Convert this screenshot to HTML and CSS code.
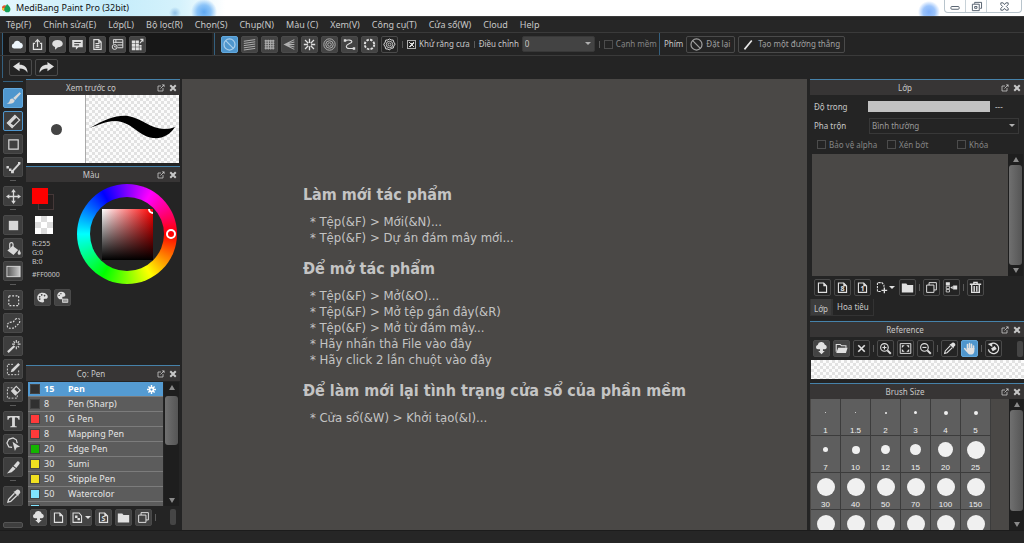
FILE: index.html
```html
<!DOCTYPE html>
<html lang="vi">
<head>
    <meta charset="UTF-8">
    <meta name="viewport" content="width=device-width, initial-scale=1.0">
    <title>MediBang Paint Pro (32bit)</title>
    <link rel="stylesheet" href="styles.css">
</head>
<body>
    <!-- Iconos -->
    <svg class="sprite" aria-hidden="true">
        <symbol id="cloud" viewBox="0 0 16 16"><path fill="#eef6fc" d="M4 13a3.2 3.2 0 0 1-.6-6.300A4.300 4.300 0 0 1 11.500 5.800 3.700 3.700 0 0 1 12 13z"/></symbol>
        <symbol id="share" viewBox="0 0 16 16"><path fill="none" stroke="currentColor" stroke-width="1.500" d="M5 6.500H3v7.500h10V6.500h-2M8 11V3M5.300 5 8 2l2.700 3"/></symbol>
        <symbol id="bubble" viewBox="0 0 16 16"><path fill="currentColor" d="M8 2.500c3.800 0 6.500 2 6.500 4.500S11.800 11.500 8.500 11.500L5 14.500v-3.400C3 10.500 1.500 9 1.500 7c0-2.500 2.700-4.500 6.500-4.500z"/></symbol>
        <symbol id="comment" viewBox="0 0 16 16"><path fill="currentColor" fill-rule="evenodd" d="M1.500 2.500h13v9H9l-3 3v-3H1.500zM4 5v1.300h8V5zM4 7.800v1.300h6V7.800z"/></symbol>
        <symbol id="doc" viewBox="0 0 16 16"><path fill="none" stroke="currentColor" stroke-width="1.400" d="M3.500 2h6l3 3v9h-9zM5.500 7h5M5.500 9.300h5M5.500 11.600h5M9.500 2v3h3"/></symbol>
        <symbol id="history" viewBox="0 0 16 16"><g fill="none" stroke="currentColor" stroke-width="1.200"><path d="M3 7V2h11.500v10H8M3 5.300h11.500M8 8.600h6.500M6 2v4"/><circle cx="4.500" cy="11" r="3"/><path d="M4.500 9.500V11H6"/></g></symbol>
        <symbol id="grid-edit" viewBox="0 0 16 16"><path fill="currentColor" d="M1 3h4v3.500H1zM5.700 3h4v3.500h-4zM1 7.200h4v3.500H1zM5.700 7.200h4v3.500h-4zM1 11.400h4V15H1zM5.700 11.400h4V15h-4zM10.400 8.500H13v2.200h-2.600zM10.400 11.400H13V15h-2.600z"/><path fill="none" stroke="currentColor" stroke-width="1.300" d="M11 6.500 14.500 2M11.500 1.700h3.200v3"/></symbol>
        <symbol id="ban" viewBox="0 0 16 16"><g fill="none" stroke="currentColor" stroke-width="1.500"><circle cx="8" cy="8" r="6.800"/><path d="M3.300 3.300 12.700 12.700"/></g></symbol>
        <symbol id="parallel" viewBox="0 0 16 16"><path fill="none" stroke="currentColor" stroke-width="1.200" d="M1 4 15 2M1 6.700 15 4.700M1 9.400 15 7.400M1 12.100 15 10.100M1 14.800l14-2"/></symbol>
        <symbol id="cross-grid" viewBox="0 0 16 16"><path fill="none" stroke="currentColor" stroke-width="1.400" d="M2 3.500h12M2 6.500h12M2 9.500h12M2 12.500h12M3.500 2v12M6.500 2v12M9.500 2v12M12.500 2v12"/></symbol>
        <symbol id="vanish" viewBox="0 0 16 16"><path fill="none" stroke="currentColor" stroke-width="1.300" d="M14 2 2 8l12 6M14 5 2 8l12 3M2 8h12"/></symbol>
        <symbol id="radial" viewBox="0 0 16 16"><path fill="none" stroke="currentColor" stroke-width="1.600" d="M8 1v5M8 10v5M1 8h5M10 8h5M2.500 2.500l4 4M9.500 9.500l4 4M13.500 2.500l-4 4M6.500 9.500l-4 4"/></symbol>
        <symbol id="rings" viewBox="0 0 16 16"><g fill="none" stroke="currentColor" stroke-width="1.200"><circle cx="8" cy="8" r="7"/><circle cx="8" cy="8" r="4.600"/><circle cx="8" cy="8" r="2.200"/></g></symbol>
        <symbol id="curve" viewBox="0 0 16 16"><path fill="none" stroke="currentColor" stroke-width="1.300" d="M2.500 3C7 2 11 2.500 11 4.500S4 7.500 4 10.500s4 2.500 9 2.500"/><path fill="currentColor" d="M1 1.500h3v3H1zM12 11.500h3v3h-3z"/></symbol>
        <symbol id="dots-ring" viewBox="0 0 16 16"><circle cx="8" cy="8" r="5.800" fill="none" stroke="currentColor" stroke-width="2.400" stroke-dasharray="3 1.555"/></symbol>
        <symbol id="gear" viewBox="0 0 16 16"><g fill="none" stroke="currentColor"><path stroke-width="1.200" d="M8 1.200 10 2.400l2.600.2.700 2.500 1.600 2.400-1.600 2.400-.7 2.500-2.600.2L8 14.800l-2-1.200-2.600-.2-.7-2.500L1.100 8.500V7.500l1.600-2.400.7-2.500 2.600-.2z"/><circle cx="8" cy="8" r="4"/><circle cx="8" cy="8" r="1.800"/></g></symbol>
        <symbol id="undo" viewBox="0 0 16 16"><path fill="currentColor" d="M0 7 7 2v3c5 0 8.500 2.700 8.500 8.500-2-3-4.500-4.500-8.500-4.500v3z"/></symbol>
        <symbol id="redo" viewBox="0 0 16 16"><path fill="currentColor" d="M16 7 9 2v3C4 5 .5 7.700.5 13.500 2.500 10.500 5 9 9 9v3z"/></symbol>
        <symbol id="line" viewBox="0 0 16 16"><path stroke="#e8e8e8" stroke-width="2" d="M3 14 12 3"/></symbol>
        <symbol id="popout" viewBox="0 0 16 16"><path fill="none" stroke="currentColor" stroke-width="1.600" d="M8 4H2v10h10V8M7 9l6-6"/><path fill="currentColor" d="M9.500 1H15v5.500z"/></symbol>
        <symbol id="close" viewBox="0 0 16 16"><path stroke="currentColor" stroke-width="4" d="M2.500 2.500l11 11M13.500 2.500l-11 11"/></symbol>
        <symbol id="brush" viewBox="0 0 16 16"><path fill="currentColor" d="M14.500 1.200 16 2.700 9.800 9.600 7.600 7.500zM7 8.100l2.300 2.100c-.6 3.500-4.900 4.200-8.600 2.900 2-.3 2.800-1.300 3.200-2.700.5-1.500 1.500-2.500 3.100-2.300z"/></symbol>
        <symbol id="eraser" viewBox="0 0 16 16"><path fill="none" stroke="currentColor" stroke-width="1.400" d="M9.500 1.500 14.500 6.500 6.500 14.500 1.500 9.500z"/><path fill="currentColor" d="M9.500 1.500l2 2-8 8-2-2zM8.500 12.500l-2 2-3.500-3.500 2-1z"/></symbol>
        <symbol id="square" viewBox="0 0 16 16"><path fill="none" stroke="currentColor" stroke-width="1.300" d="M3 3h10v10H3z"/></symbol>
        <symbol id="polyline" viewBox="0 0 16 16"><path fill="none" stroke="currentColor" stroke-width="2" d="M6.500 12.500l8-9"/><path fill="currentColor" d="M.5 6.500h2.600v2.600H.5zM3.200 9h2.600v2.600H3.200zM5.400 11h3v3h-3zM12.800 2h2.600v2.600h-2.600z"/></symbol>
        <symbol id="move" viewBox="0 0 16 16"><path stroke="currentColor" stroke-width="1.400" d="M8 2v12M2 8h12"/><path fill="currentColor" d="M8 0l2.500 3.500h-5zM8 16l2.500-3.500h-5zM0 8l3.500-2.500v5zM16 8l-3.500-2.500v5z"/></symbol>
        <symbol id="solid" viewBox="0 0 16 16"><path fill="currentColor" d="M3 3h10v10H3z"/></symbol>
        <symbol id="bucket" viewBox="0 0 16 16"><path fill="currentColor" d="M7 5l6 4.500-5 5.500-6.500-5z"/><path fill="none" stroke="currentColor" stroke-width="1.300" d="M4 8V3.500C4 1 7.500 1 7.500 3.500V8"/><path fill="currentColor" d="M14 9c1 2 1.800 3 1.800 4a1.700 1.700 0 0 1-3.400 0c0-1 .8-2 1.600-4z"/></symbol>
        <symbol id="gradient" viewBox="0 0 16 16"><rect x="1" y="2.500" width="14" height="11" fill="url(#fade)" stroke="currentColor"/></symbol>
        <symbol id="select-rect" viewBox="0 0 16 16"><path fill="none" stroke="currentColor" stroke-width="1.200" stroke-dasharray="2 1.600" d="M3 3h10.500v10.500H3z"/></symbol>
        <symbol id="lasso" viewBox="0 0 16 16"><path fill="none" stroke="currentColor" stroke-width="1.200" stroke-dasharray="2 1.300" d="M10 3.500c3-2 5-.5 4.700 2C14.500 9 11 9.500 10 11.500S2 14 1.500 11 3 6.500 6 6.500s2.500-2 4-3z"/></symbol>
        <symbol id="wand" viewBox="0 0 16 16"><path stroke="currentColor" stroke-width="2.400" d="M2 14l7-6.500"/><path stroke="currentColor" stroke-width="1.200" d="M11 1v3M11 8v3M6.500 5.500h3M12.500 5.500h3M8 2.500l1.500 1.500M14 2.500 12.500 4M14 9l-1.500-1.500"/></symbol>
        <symbol id="select-pen" viewBox="0 0 16 16"><path fill="none" stroke="currentColor" stroke-dasharray="2 1.500" d="M13.500 9v4.500h-12v-11H9"/><path fill="currentColor" d="M13 1l2 2-7 7-3 1 1-3z"/></symbol>
        <symbol id="select-eraser" viewBox="0 0 16 16"><path fill="none" stroke="currentColor" stroke-dasharray="2 1.500" d="M12 11v3H1.500V3H7"/><path fill="#3c3c3c" stroke="currentColor" stroke-width="1.200" d="M11 1.500l4 4-5 5-4-4z"/><path fill="currentColor" d="M8.500 4l4 4-2.500 2.500-4-4z"/></symbol>
        <symbol id="text" viewBox="0 0 16 16"><path fill="currentColor" d="M1.500 2h13v4h-1.200c-.3-1.800-.8-2.400-3.800-2.400V12c0 1 .5 1.200 2 1.300V14h-7v-.7c1.500-.1 2-.3 2-1.300V3.600c-3 0-3.500.6-3.800 2.400H1.500z"/></symbol>
        <symbol id="object" viewBox="0 0 16 16"><path fill="none" stroke="currentColor" stroke-width="1.300" d="M6.500 11 3 10.500 1 6.500l2-4L7.500 1 11 3l1 3.500"/><path fill="currentColor" d="M7 5l8 5.500-3.600.7-1.900 3.800z"/></symbol>
        <symbol id="knife" viewBox="0 0 16 16"><path fill="currentColor" d="M12 1.500c1.500-.5 3 1 2.500 2.500L11 8.500 8 6zM7.300 6.800l3 2.500L6 13l-5 1.500z"/></symbol>
        <symbol id="dropper" viewBox="0 0 16 16"><path fill="none" stroke="currentColor" stroke-width="1.400" d="M9 4.500 2.800 11 2 14l3-.8 6.500-6.200"/><path fill="currentColor" d="M8 3l1.500-.5 2-1.700c2-1 4.500 1.500 3.500 3.500l-1.700 2L13 8z"/></symbol>
        <symbol id="palette" viewBox="0 0 16 16"><path fill="currentColor" fill-rule="evenodd" d="M8 2c4 0 6.500 2.300 6.500 5 0 2.400-2 2.800-3.700 2.600-1.300-.1-1.600 1-1 2 .7 1.300 0 2.400-1.800 2.400-4 0-6.500-2.800-6.500-6S4 2 8 2zM4.500 6a1 1 0 1 0 .1 0zM7 3.700a1 1 0 1 0 .1 0zM10.500 4.500a1 1 0 1 0 .1 0zM4.500 9a1 1 0 1 0 .1 0z"/></symbol>
        <symbol id="palette-set" viewBox="0 0 16 16"><path fill="currentColor" fill-rule="evenodd" d="M6.500 1c3.300 0 5 1.800 5 4 0 2-1.500 2.200-2.800 2-1 0-1.200.8-.8 1.500.5 1-.2 1.800-1.400 1.800C3.300 10.300 1.500 8 1.500 5.700S3.300 1 6.500 1zM3.800 4.500a.8.8 0 1 0 .1 0zM6 2.500a.8.8 0 1 0 .1 0z"/><path fill="#999" stroke="currentColor" d="M8 10h6.500v4H8z"/></symbol>
        <symbol id="cloud-up" viewBox="0 0 16 16"><path fill="currentColor" d="M3.500 9a2.700 2.700 0 0 1-.2-5.300 4.500 4.500 0 0 1 8.800-.3 2.900 2.900 0 0 1 .4 5.600H9.800v2H12l-4 4-4-4h2.200V9z"/></symbol>
        <symbol id="page" viewBox="0 0 16 16"><path fill="none" stroke="currentColor" stroke-width="1.400" d="M3 2.500h6.500L13 6v8H3z"/><path fill="currentColor" d="M9 2l4.500 4.500H9z"/></symbol>
        <symbol id="page-plus" viewBox="0 0 16 16"><path fill="none" stroke="currentColor" stroke-width="1.300" stroke-dasharray="3 1" d="M7 13H3V2h5.500L11 5v2"/><path stroke="currentColor" stroke-width="1.600" d="M11.500 8v7M8 11.500h7"/></symbol>
        <symbol id="page-check" viewBox="0 0 16 16"><path fill="none" stroke="currentColor" stroke-width="1.300" d="M2.500 2.500H10L13 6v8H2.500z"/><path fill="currentColor" d="M5 5.500h3v3H5zM8 8.500h3v3H8z"/></symbol>
        <symbol id="folder" viewBox="0 0 16 16"><path fill="currentColor" d="M1 3h5.500L8 5h7v9H1z"/></symbol>
        <symbol id="folder-open" viewBox="0 0 16 16"><path fill="none" stroke="currentColor" stroke-width="1.300" d="M1.500 12V3h5L8 4.700h5.500V7"/><path fill="currentColor" d="M4 7h11.500l-2 6.500H1.500z"/></symbol>
        <symbol id="copy" viewBox="0 0 16 16"><path fill="none" stroke="currentColor" stroke-width="1.200" d="M2 5h9v9H2zM5 5V2h9v9h-3"/></symbol>
        <symbol id="merge" viewBox="0 0 16 16"><path fill="currentColor" d="M1 1.500h5v4H1zM10 5.500h5v5h-5zM6.500 8l3-2v4z"/><path fill="none" stroke="currentColor" d="M1.500 6.500h4v3h-4zM1.500 10.500h4v3h-4z"/></symbol>
        <symbol id="trash" viewBox="0 0 16 16"><path fill="none" stroke="currentColor" stroke-width="1.700" d="M1 4h14M6 3.500V1.700h4v1.800M3.300 4v10h9.400V4M6.400 6V13M9.600 6v7"/></symbol>
        <symbol id="cross" viewBox="0 0 16 16"><path stroke="currentColor" stroke-width="2" d="M4 4l8 8M12 4l-8 8"/></symbol>
        <symbol id="zoom-in" viewBox="0 0 16 16"><g fill="none" stroke="currentColor" stroke-width="1.400"><circle cx="6.700" cy="6.700" r="4.700"/><path d="M4.200 6.700h5M6.700 4.200v5"/><path stroke-width="2.400" d="M10.300 10.300 14.500 14.500"/></g></symbol>
        <symbol id="zoom-out" viewBox="0 0 16 16"><g fill="none" stroke="currentColor" stroke-width="1.400"><circle cx="6.700" cy="6.700" r="4.700"/><path d="M4.200 6.700h5"/><path stroke-width="2.400" d="M10.300 10.300 14.500 14.500"/></g></symbol>
        <symbol id="fit" viewBox="0 0 16 16"><path fill="none" stroke="currentColor" stroke-width="1.200" d="M1.500 2h13v12h-13z"/><path fill="currentColor" d="M3.500 4h3.500l-3.500 3.500zM12.500 4v3.500L9 4zM3.500 12V8.500L7 12zM12.500 12H9l3.500-3.500z"/></symbol>
        <symbol id="hand" viewBox="0 0 16 16"><path fill="none" stroke="currentColor" stroke-width="1.900" stroke-linecap="round" d="M5.500 8V3.200M8 7.500V2M10.500 8V2.800M13 8.500V5M5 11.500 2 8"/><path fill="currentColor" d="M4.500 7.500H14V11c0 3-2 4.500-4.500 4.500-2.200 0-3.200-1-4.500-3z"/></symbol>
        <symbol id="rotate" viewBox="0 0 16 16"><path fill="none" stroke="currentColor" stroke-width="1.500" d="M4.500 2.500A6.400 6.400 0 1 1 1.700 9"/><path fill="currentColor" d="M1 2.500 6.500 1v5zM5 8l4.500-3L12 8.500l-5 3z"/></symbol>
        <symbol id="gear-solid" viewBox="0 0 16 16"><path stroke="currentColor" stroke-width="2.600" d="M8 0v16M0 8h16M2.500 2.500l11 11M13.500 2.500l-11 11"/><circle cx="8" cy="8" r="4.800" fill="currentColor"/><circle cx="8" cy="8" r="2" fill="#4f96cd"/></symbol>
        <linearGradient id="fade"><stop stop-color="#555"/><stop offset="1" stop-color="#ccc"/></linearGradient>
    </svg>

    <div class="app">
        <header class="titlebar">
            <svg class="logo" viewBox="0 0 16 16"><circle cx="5" cy="8" r="5" fill="#e4572e"/><path fill="#f3c22f" d="M0 8a5 5 0 0 0 5 5V8z"/><path fill="#15a05a" d="M9 1c4 4 6 6 6 9a5.500 5.500 0 0 1-11 0c0-3 3-5 5-9z"/></svg>
            <span class="app-name">MediBang Paint Pro (32bit)</span>
            <div class="window-buttons">
                <button type="button" aria-label="Thu nhỏ"><svg viewBox="0 0 16 12"><rect x="3" y="6" width="9" height="3" rx="1"/></svg></button>
                <button type="button" aria-label="Khôi phục"><svg viewBox="0 0 16 12"><path d="M6 3V1.500h7.500V8H12M3.500 3.500H11v7H3.500zM6 6h2.500v2H6z"/></svg></button>
                <button type="button" class="wide" aria-label="Đóng"><svg viewBox="0 0 16 12"><path d="M4 2h2.500L8 4l1.500-2H12v2L10 6l2 2v2H9.500L8 8l-1.500 2H4V8l2-2-2-2z"/></svg></button>
            </div>
        </header>

        <nav class="menubar">
            <a href="#">Tệp(F)</a>
            <a href="#">Chỉnh sửa(E)</a>
            <a href="#">Lớp(L)</a>
            <a href="#">Bộ lọc(R)</a>
            <a href="#">Chọn(S)</a>
            <a href="#">Chụp(N)</a>
            <a href="#">Màu (C)</a>
            <a href="#">Xem(V)</a>
            <a href="#">Công cụ(T)</a>
            <a href="#">Cửa sổ(W)</a>
            <a href="#">Cloud</a>
            <a href="#">Help</a>
        </nav>

        <div class="toolbar">
            <div class="tool-group cloud-group">
                <button type="button" class="btn filled" aria-label="Cloud"><svg><use href="#cloud"/></svg></button>
                <button type="button" class="btn filled" aria-label="Chia sẻ"><svg><use href="#share"/></svg></button>
                <button type="button" class="btn filled" aria-label="Trò chuyện"><svg><use href="#bubble"/></svg></button>
                <button type="button" class="btn filled" aria-label="Bình luận"><svg><use href="#comment"/></svg></button>
                <button type="button" class="btn filled" aria-label="Tài liệu"><svg><use href="#doc"/></svg></button>
                <button type="button" class="btn filled" aria-label="Lịch sử"><svg><use href="#history"/></svg></button>
                <button type="button" class="btn filled" aria-label="Bảng"><svg><use href="#grid-edit"/></svg></button>
            </div>
            <div class="tool-group snap-group">
                <button type="button" class="btn active" aria-label="Tắt bắt điểm"><svg><use href="#ban"/></svg></button>
                <button type="button" class="btn filled dim" aria-label="Song song"><svg><use href="#parallel"/></svg></button>
                <button type="button" class="btn filled dim" aria-label="Lưới"><svg><use href="#cross-grid"/></svg></button>
                <button type="button" class="btn filled dim" aria-label="Điểm tụ"><svg><use href="#vanish"/></svg></button>
                <button type="button" class="btn filled" aria-label="Tỏa tròn"><svg><use href="#radial"/></svg></button>
                <button type="button" class="btn filled dim" aria-label="Đồng tâm"><svg><use href="#rings"/></svg></button>
                <button type="button" class="btn filled" aria-label="Đường cong"><svg><use href="#curve"/></svg></button>
                <button type="button" class="btn filled" aria-label="Elip"><svg><use href="#dots-ring"/></svg></button>
                <button type="button" class="btn" aria-label="Cài đặt"><svg><use href="#gear"/></svg></button>
                <i class="sep"></i>
                <label class="check"><input type="checkbox" checked>Khử răng cưa</label>
                <i class="sep"></i>
                <label for="adjust">Điều chỉnh</label>
                <div class="select-box adjust">
                    <select id="adjust"><option>0</option></select>
                </div>
                <i class="sep"></i>
                <label class="check off"><input type="checkbox" disabled>Cạnh mềm</label>
            </div>
            <div class="tool-group key-group">
                <span>Phím</span>
                <button type="button" class="btn text-btn"><svg><use href="#ban"/></svg>Đặt lại</button>
                <button type="button" class="btn text-btn"><svg><use href="#line"/></svg>Tạo một đường thẳng</button>
            </div>
        </div>

        <div class="toolbar">
            <div class="tool-group">
                <button type="button" class="btn undo-btn" aria-label="Hoàn tác"><svg><use href="#undo"/></svg></button>
                <button type="button" class="btn undo-btn" aria-label="Làm lại"><svg><use href="#redo"/></svg></button>
            </div>
        </div>

        <div class="workspace">
            <aside class="tools">
                <button type="button" class="tool active" aria-label="Cọ"><svg><use href="#brush"/></svg></button>
                <button type="button" class="tool outlined" aria-label="Tẩy"><svg><use href="#eraser"/></svg></button>
                <button type="button" class="tool" aria-label="Hình"><svg><use href="#square"/></svg></button>
                <button type="button" class="tool" aria-label="Chấm"><svg><use href="#polyline"/></svg></button>
                <i></i>
                <button type="button" class="tool" aria-label="Di chuyển"><svg><use href="#move"/></svg></button>
                <i></i>
                <button type="button" class="tool" aria-label="Tô hình"><svg><use href="#solid"/></svg></button>
                <button type="button" class="tool" aria-label="Đổ màu"><svg><use href="#bucket"/></svg></button>
                <button type="button" class="tool" aria-label="Chuyển sắc"><svg><use href="#gradient"/></svg></button>
                <i></i>
                <button type="button" class="tool" aria-label="Chọn vùng"><svg><use href="#select-rect"/></svg></button>
                <button type="button" class="tool" aria-label="Chọn tự do"><svg><use href="#lasso"/></svg></button>
                <button type="button" class="tool" aria-label="Đũa thần"><svg><use href="#wand"/></svg></button>
                <button type="button" class="tool" aria-label="Bút chọn"><svg><use href="#select-pen"/></svg></button>
                <button type="button" class="tool" aria-label="Tẩy chọn"><svg><use href="#select-eraser"/></svg></button>
                <i></i>
                <button type="button" class="tool" aria-label="Chữ"><svg><use href="#text"/></svg></button>
                <button type="button" class="tool" aria-label="Thao tác"><svg><use href="#object"/></svg></button>
                <button type="button" class="tool" aria-label="Chia khung"><svg><use href="#knife"/></svg></button>
                <i></i>
                <button type="button" class="tool" aria-label="Hút màu"><svg><use href="#dropper"/></svg></button>
                <button type="button" class="tools-more" aria-label="Thêm"></button>
            </aside>

            <div class="left-dock">
                <section class="panel">
                    <div class="panel-head"><h2>Xem trước cọ</h2><button type="button" aria-label="Tách"><svg><use href="#popout"/></svg></button><button type="button" aria-label="Đóng"><svg><use href="#close"/></svg></button></div>
                    <div class="preview">
                        <div class="preview-tip"><span></span></div>
                        <div class="preview-stroke checker">
                            <svg viewBox="0 0 93 68"><path d="M4 33C20 24 30 20 42 21c14 2 22 13 37 13 4 0 7-1 10-2-5 8-13 12-22 11-15-2-22-17-38-17-9 0-17 4-25 7z"/></svg>
                        </div>
                    </div>
                </section>

                <section class="panel color-panel">
                    <div class="panel-head"><h2>Màu</h2><button type="button" aria-label="Tách"><svg><use href="#popout"/></svg></button><button type="button" aria-label="Đóng"><svg><use href="#close"/></svg></button></div>
                    <div class="color-body">
                        <div class="color-info">
                            <div class="swatches"><span class="swatch-back"></span><span class="swatch-front"></span></div>
                            <div class="swatch-clear"></div>
                            <p>R:255<br>G:0<br>B:0</p>
                            <p>#FF0000</p>
                            <div class="palette-buttons">
                                <button type="button" class="btn filled" aria-label="Bảng màu"><svg><use href="#palette"/></svg></button>
                                <button type="button" class="btn filled" aria-label="Bộ màu"><svg><use href="#palette-set"/></svg></button>
                            </div>
                        </div>
                        <div class="wheel">
                            <div class="wheel-hole"><div class="shade"><span class="shade-mark"></span></div></div>
                            <span class="hue-mark"></span>
                        </div>
                    </div>
                </section>

                <section class="panel">
                    <div class="panel-head"><h2>Cọ: Pen</h2><button type="button" aria-label="Tách"><svg><use href="#popout"/></svg></button><button type="button" aria-label="Đóng"><svg><use href="#close"/></svg></button></div>
                    <div class="brush-body">
                        <ul class="brush-list">
                            <li class="selected"><i class="dark"></i><b>15</b><span>Pen</span><svg><use href="#gear-solid"/></svg></li>
                            <li><i class="dark"></i><b>8</b><span>Pen (Sharp)</span></li>
                            <li><i class="red"></i><b>10</b><span>G Pen</span></li>
                            <li><i class="red"></i><b>8</b><span>Mapping Pen</span></li>
                            <li><i class="green"></i><b>20</b><span>Edge Pen</span></li>
                            <li><i class="yellow"></i><b>30</b><span>Sumi</span></li>
                            <li><i class="yellow"></i><b>50</b><span>Stipple Pen</span></li>
                            <li><i class="cyan"></i><b>50</b><span>Watercolor</span></li>
                            <li><i class="cyan"></i></li>
                        </ul>
                        <div class="scrollbar"><span class="thumb brush-thumb"></span></div>
                    </div>
                    <div class="panel-tools brush-tools">
                        <button type="button" class="btn filled" aria-label="Thêm từ cloud"><svg><use href="#cloud-up"/></svg></button>
                        <button type="button" class="btn filled" aria-label="Cọ mới"><svg><use href="#page"/></svg></button>
                        <button type="button" class="btn filled drop" aria-label="Cọ bitmap"><svg><use href="#page-check"/></svg></button>
                        <button type="button" class="btn filled" aria-label="Cọ script"><svg><use href="#page"/></svg><small>S</small></button>
                        <button type="button" class="btn filled" aria-label="Thư mục"><svg><use href="#folder"/></svg></button>
                        <button type="button" class="btn filled" aria-label="Nhân đôi"><svg><use href="#copy"/></svg></button>
                        <i class="sep"></i>
                        <i class="grip"></i>
                    </div>
                </section>
            </div>

            <main class="canvas">
                <div class="welcome">
                    <h1>Làm mới tác phẩm</h1>
                    <ul>
                        <li>* Tệp(&amp;F) &gt; Mới(&amp;N)...</li>
                        <li>* Tệp(&amp;F) &gt; Dự án đám mây mới...</li>
                    </ul>
                    <h1>Để mở tác phẩm</h1>
                    <ul>
                        <li>* Tệp(&amp;F) &gt; Mở(&amp;O)...</li>
                        <li>* Tệp(&amp;F) &gt; Mở tệp gần đây(&amp;R)</li>
                        <li>* Tệp(&amp;F) &gt; Mở từ đám mây...</li>
                        <li>* Hãy nhấn thả File vào đây</li>
                        <li>* Hãy click 2 lần chuột vào đây</li>
                    </ul>
                    <h1>Để làm mới lại tình trạng cửa sổ của phần mềm</h1>
                    <ul>
                        <li>* Cửa sổ(&amp;W) &gt; Khởi tạo(&amp;I)...</li>
                    </ul>
                </div>
            </main>

            <div class="right-dock">
                <section class="panel layer-panel">
                    <div class="panel-head"><h2>Lớp</h2><button type="button" aria-label="Tách"><svg><use href="#popout"/></svg></button><button type="button" aria-label="Đóng"><svg><use href="#close"/></svg></button></div>
                    <div class="layer-form">
                        <div class="field">
                            <span class="field-name">Độ trong</span>
                            <div class="opacity-bar"></div>
                            <span>---</span>
                        </div>
                        <div class="field">
                            <label class="field-name" for="blend">Pha trộn</label>
                            <div class="select-box blend">
                                <select id="blend"><option>Bình thường</option></select>
                            </div>
                        </div>
                        <div class="layer-checks">
                            <label class="check off"><input type="checkbox" disabled>Bảo vệ alpha</label>
                            <label class="check off"><input type="checkbox" disabled>Xén bớt</label>
                            <label class="check off"><input type="checkbox" disabled>Khóa</label>
                        </div>
                    </div>
                    <div class="layer-body">
                        <div class="layer-list"></div>
                        <div class="scrollbar"><span class="thumb layer-thumb"></span></div>
                    </div>
                    <div class="panel-tools">
                        <button type="button" class="btn" aria-label="Lớp mới"><svg><use href="#page"/></svg></button>
                        <button type="button" class="btn" aria-label="Lớp 8bit"><svg><use href="#page"/></svg><small>8</small></button>
                        <button type="button" class="btn" aria-label="Lớp 1bit"><svg><use href="#page"/></svg><small>1</small></button>
                        <button type="button" class="btn drop bare" aria-label="Thêm lớp"><svg><use href="#page-plus"/></svg></button>
                        <button type="button" class="btn" aria-label="Thư mục"><svg><use href="#folder"/></svg></button>
                        <i class="sep"></i>
                        <button type="button" class="btn" aria-label="Nhân đôi"><svg><use href="#copy"/></svg></button>
                        <button type="button" class="btn" aria-label="Gộp lớp"><svg><use href="#merge"/></svg></button>
                        <i class="sep"></i>
                        <button type="button" class="btn" aria-label="Xóa"><svg><use href="#trash"/></svg></button>
                    </div>
                </section>
                <div class="tabs">
                    <button type="button" class="tab current">Lớp</button>
                    <button type="button" class="tab">Hoa tiêu</button>
                </div>

                <section class="panel">
                    <div class="panel-head"><h2>Reference</h2><button type="button" aria-label="Tách"><svg><use href="#popout"/></svg></button><button type="button" aria-label="Đóng"><svg><use href="#close"/></svg></button></div>
                    <div class="panel-tools reference-tools">
                        <button type="button" class="btn filled" aria-label="Mở từ cloud"><svg><use href="#cloud-up"/></svg></button>
                        <button type="button" class="btn filled" aria-label="Mở tệp"><svg><use href="#folder-open"/></svg></button>
                        <button type="button" class="btn" aria-label="Xóa"><svg><use href="#cross"/></svg></button>
                        <i class="sep"></i>
                        <button type="button" class="btn" aria-label="Phóng to"><svg><use href="#zoom-in"/></svg></button>
                        <button type="button" class="btn" aria-label="Vừa khung"><svg><use href="#fit"/></svg></button>
                        <button type="button" class="btn" aria-label="Thu nhỏ"><svg><use href="#zoom-out"/></svg></button>
                        <i class="sep"></i>
                        <button type="button" class="btn" aria-label="Hút màu"><svg><use href="#dropper"/></svg></button>
                        <button type="button" class="btn active" aria-label="Bàn tay"><svg><use href="#hand"/></svg></button>
                        <i class="sep"></i>
                        <button type="button" class="btn" aria-label="Xoay"><svg><use href="#rotate"/></svg></button>
                        <i class="grip"></i>
                    </div>
                    <div class="reference-view checker"></div>
                </section>

                <section class="panel size-panel">
                    <div class="panel-head"><h2>Brush Size</h2><button type="button" aria-label="Tách"><svg><use href="#popout"/></svg></button><button type="button" aria-label="Đóng"><svg><use href="#close"/></svg></button></div>
                    <div class="size-body">
                        <div class="size-grid">
                            <div class="size"><i style="--d: 1px"></i>1</div>
                            <div class="size"><i style="--d: 1px"></i>1.5</div>
                            <div class="size"><i style="--d: 2px"></i>2</div>
                            <div class="size"><i style="--d: 3px"></i>3</div>
                            <div class="size"><i style="--d: 4px"></i>4</div>
                            <div class="size"><i style="--d: 4px"></i>5</div>
                            <div class="size"><i style="--d: 5px"></i>7</div>
                            <div class="size"><i style="--d: 8px"></i>10</div>
                            <div class="size"><i style="--d: 9px"></i>12</div>
                            <div class="size"><i style="--d: 11px"></i>15</div>
                            <div class="size"><i style="--d: 15px"></i>20</div>
                            <div class="size"><i style="--d: 18px"></i>25</div>
                            <div class="size"><i style="--d: 18px"></i>30</div>
                            <div class="size"><i style="--d: 18px"></i>40</div>
                            <div class="size"><i style="--d: 18px"></i>50</div>
                            <div class="size"><i style="--d: 18px"></i>70</div>
                            <div class="size"><i style="--d: 18px"></i>100</div>
                            <div class="size"><i style="--d: 18px"></i>150</div>
                            <div class="size last"><i style="--d: 18px"></i></div>
                            <div class="size last"><i style="--d: 18px"></i></div>
                            <div class="size last"><i style="--d: 18px"></i></div>
                            <div class="size last"><i style="--d: 18px"></i></div>
                            <div class="size last"><i style="--d: 18px"></i></div>
                            <div class="size last"><i style="--d: 18px"></i></div>
                        </div>
                        <div class="scrollbar"><span class="thumb size-thumb"></span></div>
                    </div>
                </section>
            </div>
        </div>

        <footer class="statusbar"></footer>
    </div>
</body>
</html>
```
FILE: styles.css
```css
* {
    margin: 0;
    padding: 0;
    box-sizing: border-box;
}

body {
    font-family: "Noto Sans", "Open Sans", sans-serif;
    font-size: 8px;
    line-height: 12px;
    color: #c8c8c8;
    background: #242424;
}

button,
select,
input {
    font: inherit;
    color: inherit;
}

button {
    border: none;
    background: none;
    cursor: pointer;
}

ul {
    list-style: none;
}

.sprite {
    position: absolute;
    width: 0;
    height: 0;
}

.app {
    display: flex;
    flex-direction: column;
    height: 100vh;
    overflow: hidden;
}

/* Barra de título */
.titlebar {
    display: flex;
    align-items: center;
    height: 16px;
    padding-left: 2px;
    font-size: 9px;
    color: #111;
    background:
        radial-gradient(circle at 204px 12px, #5fa8f2 0, #8cc4f8 7px, transparent 13px),
        radial-gradient(circle at 175px 13px, #8fc0e8 0, transparent 6px),
        radial-gradient(circle at 929px 12px, #7fb0fa 0, #9cc4fb 6px, transparent 11px),
        linear-gradient(90deg, #e4f7fd 0, #c4ecfa 110px, #d5f2fc 180px, #fff 225px);
}

.logo {
    width: 9px;
    height: 10px;
}

.app-name {
    flex: 1;
    padding-left: 5px;
}

.window-buttons {
    display: flex;
    align-self: flex-start;
    height: 13px;
    margin-right: 2px;
    border: 1px solid #b8c4cc;
    border-top: none;
    border-radius: 0 0 4px 4px;
}

.window-buttons button {
    display: flex;
    align-items: center;
    justify-content: center;
    width: 21px;
    border-right: 1px solid #c8d2d8;
}

.window-buttons .wide {
    width: 34px;
    border-right: none;
}

.window-buttons svg {
    width: 15px;
    height: 11px;
    fill: none;
    stroke: #4c5866;
}

/* Menú */
.menubar {
    display: flex;
    align-items: center;
    gap: 12px;
    height: 16px;
    padding-left: 6px;
    border-top: 1px solid #3a3a3a;
    font-size: 9px;
    background: #262626;
}

.menubar a {
    color: #c8c8c8;
    text-decoration: none;
}

/* Barras de herramientas */
.toolbar {
    display: flex;
    height: 23px;
    border-top: 1px solid #3a3a3a;
    white-space: nowrap;
}

.tool-group {
    display: flex;
    align-items: center;
    gap: 3px;
    margin-left: 2px;
    padding-left: 6px;
    border-left: 1px solid #34607f;
}

.cloud-group {
    width: 210px;
    background: #171717;
}

.snap-group {
    width: 443px;
}

.key-group {
    padding-left: 4px;
}

.btn {
    position: relative;
    display: flex;
    flex: none;
    align-items: center;
    justify-content: center;
    width: 17px;
    height: 17px;
    border: 1px solid #4a4a4a;
    border-radius: 2px;
    color: #e0e0e0;
}

.btn svg {
    width: 13px;
    height: 13px;
}

.btn small {
    position: absolute;
    inset: 3px 0 0;
    font-size: 7px;
    font-weight: bold;
    line-height: 12px;
}

.btn.filled {
    background: #434343;
}

.btn.dim {
    color: #b0b0b0;
}

.btn.active,
.tool.active {
    border-color: #62a8dc;
    background: #4f96cd;
}

.snap-group .active {
    color: #a9cdea;
}

.text-btn {
    gap: 3px;
    width: auto;
    padding: 0 4px 0 3px;
    color: #a0a0a0;
}

.undo-btn {
    width: 23px;
}

.undo-btn svg {
    width: 15px;
    height: 15px;
}

.drop {
    justify-content: flex-start;
    width: 22px;
}

.drop::after {
    content: "";
    margin-left: 1px;
    border: 3px solid transparent;
    border-top-color: #e0e0e0;
    border-bottom: none;
}

.bare {
    border-color: transparent;
}

.sep {
    flex: none;
    width: 1px;
    height: 7px;
    background: #5a5a5a;
}

.snap-group .sep {
    margin: 0 1px;
}

.grip {
    width: 6px;
    height: 16px;
    margin-left: auto;
    border-radius: 2px;
    background: #454545;
}

.check {
    display: flex;
    align-items: center;
    gap: 3px;
}

.check input {
    appearance: none;
    width: 9px;
    height: 9px;
    border: 1px solid #b0b0b0;
}

.check input:checked {
    background:
        linear-gradient(45deg, transparent 40%, #ddd 40%, #ddd 60%, transparent 60%) center / 5px 5px no-repeat,
        linear-gradient(-45deg, transparent 40%, #ddd 40%, #ddd 60%, transparent 60%) center / 5px 5px no-repeat;
}

.off {
    color: #858585;
}

.off input {
    border-color: #4c4c4c;
}

.select-box {
    position: relative;
    border: 1px solid #383838;
}

.select-box::after {
    content: "";
    position: absolute;
    right: 3px;
    top: 5px;
    border: 3px solid transparent;
    border-top-color: #b0b0b0;
    border-bottom: none;
    pointer-events: none;
}

.select-box select {
    display: block;
    appearance: none;
    width: 100%;
    height: 100%;
    padding-left: 2px;
    border: none;
    background: transparent;
}

.adjust {
    width: 73px;
    height: 16px;
    border-radius: 2px;
    background: #434343;
}

/* Zona de trabajo */
.workspace {
    display: flex;
    flex: 1;
    min-height: 0;
    padding-top: 1px;
}

.tools {
    display: flex;
    flex-direction: column;
    flex: none;
    align-items: center;
    gap: 3px;
    width: 26px;
    padding-top: 9px;
    background: linear-gradient(#34607f, #34607f) 3px 2px / 20px 1px no-repeat;
}

.tools i {
    width: 6px;
    height: 3px;
    border-top: 1px solid #5a5a5a;
}

.tool {
    display: flex;
    flex: none;
    align-items: center;
    justify-content: center;
    width: 20px;
    height: 20px;
    border: 1px solid #4a4a4a;
    border-radius: 2px;
    color: #d8d8d8;
    background: #3e3e3e;
}

.tool svg {
    width: 15px;
    height: 15px;
}

.outlined {
    border-color: #4f96cd;
}

.tools-more {
    width: 20px;
    height: 6px;
    margin: auto 0 2px;
    border: 1px solid #555;
    border-radius: 2px;
    background: #3e3e3e;
}

.left-dock {
    display: flex;
    flex-direction: column;
    flex: none;
    gap: 3px;
    width: 154px;
}

.panel {
    flex: none;
    border-top: 1px solid #4682aa;
}

.panel-head {
    display: flex;
    align-items: center;
    gap: 4px;
    height: 15px;
    padding: 0 3px;
    background: #373535;
}

.panel-head h2 {
    flex: 1;
    padding-top: 1px;
    font-size: 8px;
    font-weight: normal;
    line-height: 14px;
    text-align: center;
}

.panel-head button {
    width: 8px;
    height: 8px;
    color: #c8c8c8;
}

.panel-head svg {
    display: block;
    width: 8px;
    height: 8px;
}

.checker {
    background: repeating-conic-gradient(#e2e2e2 0 25%, #fcfcfc 0 50%) 0 0 / 6px 6px;
}

/* Vista previa del pincel */
.preview {
    display: flex;
    height: 68px;
    padding: 0 1px;
}

.preview-tip {
    display: flex;
    flex: none;
    align-items: center;
    justify-content: center;
    width: 59px;
    border-right: 1px solid #aaa;
    background: #fff;
}

.preview-tip span {
    width: 11px;
    height: 11px;
    border-radius: 50%;
    background: #444;
}

.preview-stroke {
    flex: 1;
}

.preview-stroke svg {
    display: block;
}

/* Color */
.color-panel {
    flex: 1;
}

.color-body {
    display: flex;
    padding-top: 2px;
}

.color-info {
    width: 51px;
    padding: 4px 0 0 6px;
    font-size: 7px;
    line-height: 9px;
}

.swatches {
    position: relative;
    width: 22px;
    height: 22px;
}

.swatches span {
    position: absolute;
    width: 16px;
    height: 16px;
}

.swatch-front {
    left: 0;
    top: 0;
    background: #f00;
}

.swatch-back {
    right: 0;
    bottom: 0;
    border: 1px solid #453838;
    background: #252020;
}

.swatch-clear {
    width: 18px;
    height: 18px;
    margin: 6px 0 5px 3px;
    background: repeating-conic-gradient(#ddd 0 25%, #fff 0 50%) 0 0 / 12px 12px;
}

.color-info p {
    margin-bottom: 4px;
}

.palette-buttons {
    display: flex;
    gap: 3px;
    margin: 10px 0 0 2px;
}

.wheel {
    position: relative;
    display: flex;
    flex: none;
    align-items: center;
    justify-content: center;
    width: 100px;
    height: 100px;
    border-radius: 50%;
    background: conic-gradient(from 90deg, #f00, #ff0, #0f0, #0ff, #00f, #f0f, #f00);
}

.wheel-hole {
    display: flex;
    align-items: center;
    justify-content: center;
    width: 74px;
    height: 74px;
    border-radius: 50%;
    background: #242424;
}

.shade {
    position: relative;
    width: 51px;
    height: 51px;
    overflow: hidden;
    background: linear-gradient(transparent, #000), linear-gradient(90deg, #fff, #f00);
}

.hue-mark,
.shade-mark {
    position: absolute;
    width: 10px;
    height: 10px;
    border: 2px solid #fff;
    border-radius: 50%;
}

.hue-mark {
    right: 1px;
    top: 45px;
}

.shade-mark {
    right: -5px;
    top: -5px;
}

/* Lista de pinceles */
.brush-body {
    display: flex;
    gap: 1px;
    height: 125px;
    padding: 1px 1px 0 2px;
}

.brush-list {
    flex: 1;
    overflow: hidden;
    font-size: 9px;
    color: #e4e4e4;
    background: #5c5c5c;
}

.brush-list li {
    display: flex;
    align-items: center;
    height: 15px;
    padding: 0 7px 0 2px;
    border-bottom: 1px solid #7c7c7c;
}

.brush-list i {
    width: 10px;
    height: 10px;
    border: 1px solid #444;
}

.brush-list b {
    width: 24px;
    margin-left: 4px;
    font-weight: inherit;
}

.brush-list span {
    flex: 1;
}

.brush-list svg {
    width: 9px;
    height: 9px;
}

.brush-list .selected {
    font-weight: bold;
    color: #fff;
    background: #549bd2;
}

.brush-list .dark { background: #303030; }
.brush-list .red { background: #ff3a3a; }
.brush-list .green { background: #14b400; }
.brush-list .yellow { background: #f0e020; }
.brush-list .cyan { background: #80e4ff; }

.scrollbar {
    display: flex;
    flex-direction: column;
    align-items: center;
    justify-content: space-between;
    flex: none;
    width: 15px;
    background: #1e1e1e;
}

.scrollbar::before,
.scrollbar::after {
    content: "";
    margin: 3px 0;
    border: 3px solid transparent;
}

.scrollbar::before {
    border-top: none;
    border-bottom: 5px solid #8a8a8a;
}

.scrollbar::after {
    border-bottom: none;
    border-top: 5px solid #8a8a8a;
}

.thumb {
    width: 13px;
    margin-bottom: auto;
    border-radius: 3px;
    background: linear-gradient(90deg, #707070, #555);
}

.brush-thumb {
    height: 49px;
    margin-top: 3px;
}

.layer-thumb {
    flex: 1;
}

.size-thumb {
    height: 101px;
}

.panel-tools {
    display: flex;
    align-items: center;
    gap: 3px;
    height: 23px;
    padding: 0 0 0 4px;
}

.brush-tools {
    height: 24px;
    padding: 0 4px 2px;
}

.reference-tools {
    padding: 0 1px 0 3px;
}

/* Lienzo */
.canvas {
    display: flex;
    flex: 1;
    align-items: center;
    justify-content: center;
    margin: 0 3px 0 2px;
    padding-top: 2px;
    background: #4a4846;
}

.welcome {
    font-family: "DejaVu Sans Condensed", "Noto Sans", sans-serif;
    color: #c4c4c4;
}

.welcome h1 {
    font-size: 16px;
    font-weight: bold;
    line-height: 20px;
}

.welcome ul {
    padding: 9px 0 13px 7px;
    font-size: 13px;
    line-height: 16px;
}

.welcome ul:last-child {
    padding-bottom: 0;
}

/* Panel de capas */
.right-dock {
    display: flex;
    flex-direction: column;
    flex: none;
    width: 214px;
}

.layer-form {
    padding: 2px 5px 0 4px;
}

.field {
    display: flex;
    align-items: center;
    height: 19px;
}

.field-name {
    width: 54px;
}

.opacity-bar {
    width: 122px;
    height: 11px;
    margin-right: 5px;
    background: #c2c2c2;
}

.blend {
    flex: 1;
    height: 16px;
    margin-left: 1px;
    color: #999;
}

.layer-checks {
    display: grid;
    grid-template-columns: 70px 70px auto;
    height: 19px;
    padding-left: 3px;
}

.layer-body {
    display: flex;
    height: 122px;
    padding: 0 1px 0 2px;
}

.layer-list {
    flex: 1;
    background: #4a4846;
}

.tabs {
    display: flex;
    height: 17px;
    margin-bottom: 5px;
}

.tab {
    padding: 0 4px;
    border: 1px solid #333;
    border-top: none;
}

.tab.current {
    padding: 4px 3px 0;
    background: #3c3c3c;
}

.reference-view {
    height: 19px;
    margin: 0 0 4px 1px;
}

/* Tamaños de pincel */
.size-panel {
    display: flex;
    flex: 1;
    flex-direction: column;
    min-height: 0;
}

.size-panel .panel-head {
    flex: none;
}

.size-body {
    display: flex;
    flex: 1;
    justify-content: space-between;
    min-height: 0;
    padding-left: 1px;
    background: #4a4846;
}

.size-grid {
    display: grid;
    grid-template-columns: repeat(6, 30px);
    grid-auto-rows: 37px;
    overflow: hidden;
}

.size {
    display: flex;
    flex-direction: column;
    align-items: center;
    justify-content: flex-end;
    border-right: 1px solid #3c3c3c;
    border-bottom: 1px solid #3c3c3c;
    font-family: "Liberation Sans", Arial, sans-serif;
    font-size: 8px;
    line-height: 9px;
    color: #f0f0f0;
    background: #5e5e5e;
}

.size i {
    width: var(--d);
    height: var(--d);
    margin: auto;
    border-radius: 50%;
    background: #f0f0f0;
}

.size.last {
    padding-bottom: 9px;
}

.statusbar {
    flex: none;
    height: 13px;
    border-top: 1px solid #1c1c1c;
    background: #262626;
}
```
